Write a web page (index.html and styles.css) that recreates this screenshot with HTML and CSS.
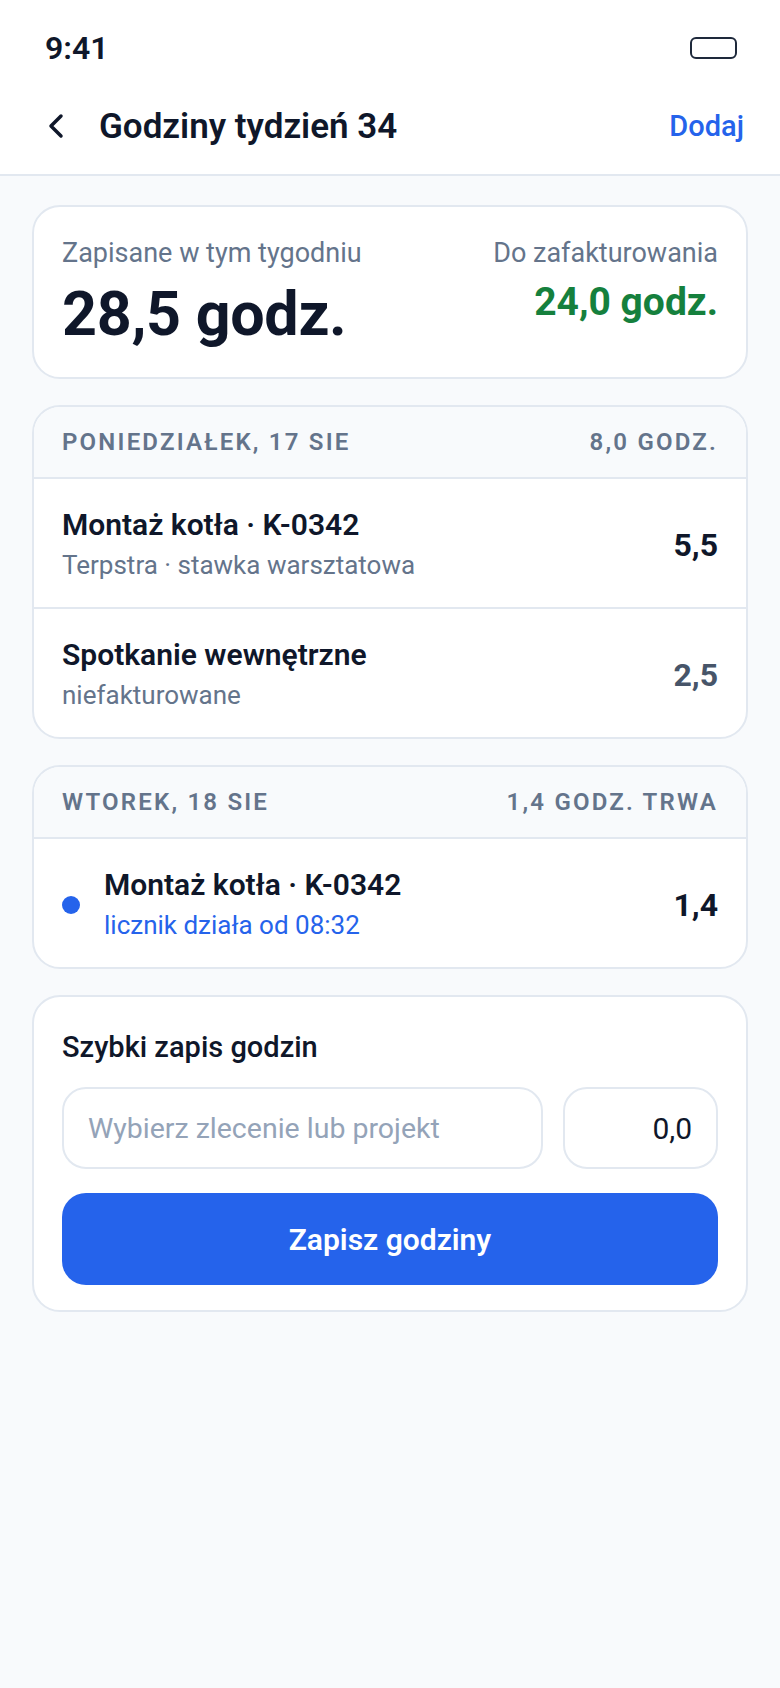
FILE: index.html
```html
<!DOCTYPE html>
<html lang="pl">

<head>
    <meta charset="UTF-8" />
    <meta name="viewport" content="width=device-width, initial-scale=1.0" />
    <title>Godziny tydzień 34</title>
    <link rel="stylesheet" href="styles.css">
</head>

<body>
    <div class="status-bar">
        <span class="time">9:41</span>
        <span class="battery"></span>
    </div>

    <header class="nav">
        <button class="back" type="button" aria-label="Wstecz">
            <svg width="28" height="28" viewBox="0 0 28 28">
                <polyline points="17,4 7,14 17,24" fill="none" stroke="#0f172a" stroke-width="3.5"
                    stroke-linecap="round" stroke-linejoin="round" />
            </svg>
        </button>
        <h1 class="nav-title">Godziny tydzień 34</h1>
        <a class="nav-action" href="#">Dodaj</a>
    </header>

    <main class="content">
        <section class="card summary">
            <div class="summary-col">
                <div class="summary-label">Zapisane w tym tygodniu</div>
                <div class="summary-total">28,5 godz.</div>
            </div>
            <div class="summary-col right">
                <div class="summary-label">Do zafakturowania</div>
                <div class="summary-billable">24,0 godz.</div>
            </div>
        </section>

        <section class="card day">
            <div class="day-head">
                <span>Poniedziałek, 17 sie</span>
                <span>8,0 godz.</span>
            </div>
            <div class="entry">
                <div class="entry-main">
                    <div class="entry-title">Montaż kotła · K-0342</div>
                    <div class="entry-sub">Terpstra · stawka warsztatowa</div>
                </div>
                <div class="entry-hours">5,5</div>
            </div>
            <div class="entry">
                <div class="entry-main">
                    <div class="entry-title">Spotkanie wewnętrzne</div>
                    <div class="entry-sub">niefakturowane</div>
                </div>
                <div class="entry-hours muted">2,5</div>
            </div>
        </section>

        <section class="card day">
            <div class="day-head">
                <span>Wtorek, 18 sie</span>
                <span>1,4 godz. trwa</span>
            </div>
            <div class="entry">
                <span class="live-dot"></span>
                <div class="entry-main">
                    <div class="entry-title">Montaż kotła · K-0342</div>
                    <div class="entry-sub live">licznik działa od 08:32</div>
                </div>
                <div class="entry-hours">1,4</div>
            </div>
        </section>

        <section class="card quick">
            <h2 class="quick-title">Szybki zapis godzin</h2>
            <div class="quick-row">
                <input class="field field-job" type="text" placeholder="Wybierz zlecenie lub projekt" />
                <input class="field field-hours" type="text" value="0,0" />
            </div>
            <button class="save-btn" type="button">Zapisz godziny</button>
        </section>
    </main>
</body>

</html>
```

FILE: styles.css
```css
body {
    margin: 0;
    background: #f8fafc;
    font-family: Roboto, "Noto Sans", sans-serif;
    color: #0f172a;
}

.status-bar {
    height: 88px;
    box-sizing: border-box;
    padding: 8px 43px 0 45px;
    display: flex;
    align-items: center;
    justify-content: space-between;
    background: #fff;
}

.time {
    font-size: 32px;
    font-weight: 600;
}

.battery {
    width: 47px;
    height: 22px;
    box-sizing: border-box;
    border: 2.5px solid #1e293b;
    border-radius: 6px;
}

.nav {
    height: 88px;
    box-sizing: border-box;
    padding: 0 36px 10px 44px;
    display: flex;
    align-items: center;
    background: #fff;
    border-bottom: 2px solid #e2e8f0;
}

.back {
    border: none;
    background: none;
    padding: 0;
    margin-right: 27px;
    display: flex;
}

.nav-title {
    flex: 1;
    margin: 0;
    font-size: 35px;
    font-weight: 600;
}

.nav-action {
    font-size: 29px;
    font-weight: 500;
    color: #2563eb;
    text-decoration: none;
}

.content {
    padding: 29px 32px 40px;
    display: flex;
    flex-direction: column;
    gap: 26px;
}

.card {
    background: #fff;
    border: 2px solid #e2e8f0;
    border-radius: 28px;
    overflow: hidden;
}

/* summary */
.summary {
    display: flex;
    justify-content: space-between;
    padding: 28px;
}

.summary-col.right {
    text-align: right;
}

.summary-label {
    font-size: 27px;
    line-height: 36px;
    color: #64748b;
}

.summary-total {
    margin-top: 8px;
    font-size: 61px;
    line-height: 70px;
    font-weight: 700;
    letter-spacing: -0.3px;
}

.summary-billable {
    margin-top: 7px;
    font-size: 39px;
    line-height: 48px;
    font-weight: 700;
    color: #15803d;
}

/* days */
.day-head {
    display: flex;
    justify-content: space-between;
    padding: 20px 28px;
    background: #f8fafc;
    border-bottom: 2px solid #e2e8f0;
    font-size: 24px;
    line-height: 30px;
    font-weight: 600;
    letter-spacing: 2.2px;
    text-transform: uppercase;
    color: #64748b;
}

.entry {
    display: flex;
    align-items: center;
    gap: 24px;
    padding: 26px 28px 22px;
}

.entry + .entry {
    border-top: 2px solid #e2e8f0;
}

.entry-main {
    flex: 1;
}

.entry-title {
    font-size: 30px;
    line-height: 40px;
    font-weight: 600;
}

.entry-sub {
    font-size: 26px;
    line-height: 40px;
    color: #64748b;
}

.entry-sub.live {
    color: #2563eb;
}

.entry-hours {
    font-size: 32px;
    font-weight: 700;
}

.entry-hours.muted {
    color: #475569;
}

.live-dot {
    width: 18px;
    height: 18px;
    border-radius: 50%;
    background: #2563eb;
}

/* quick entry */
.quick {
    padding: 30px 28px 25px;
}

.quick-title {
    margin: 0 0 20px;
    font-size: 29px;
    line-height: 40px;
    font-weight: 500;
}

.quick-row {
    display: flex;
    gap: 20px;
}

.field {
    height: 82px;
    box-sizing: border-box;
    padding: 0 24px;
    border: 2px solid #e2e8f0;
    border-radius: 24px;
    background: #fff;
    font-family: inherit;
    font-size: 28.5px;
    color: #0f172a;
    outline: none;
}

.field::placeholder {
    color: #94a3b8;
}

.field-job {
    flex: 1;
    min-width: 0;
}

.field-hours {
    width: 155px;
    text-align: right;
    font-size: 30px;
}

.save-btn {
    margin-top: 24px;
    width: 100%;
    height: 92px;
    border: none;
    border-radius: 24px;
    background: #2563eb;
    color: #fff;
    font-family: inherit;
    font-size: 30px;
    font-weight: 600;
}
```
